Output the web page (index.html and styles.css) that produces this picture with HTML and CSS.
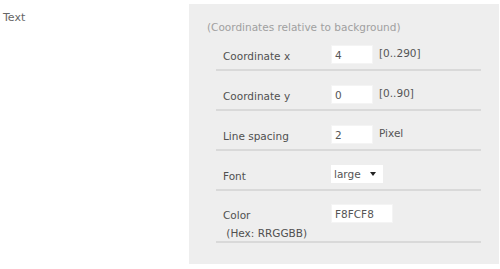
FILE: index.html
```html
<!DOCTYPE html>
<html>

<head>
    <meta charset="utf-8" />
    <title>Text</title>
    <link rel="stylesheet" href="styles.css">
</head>

<body>
    <div class="page">
        <div class="caption">Text</div>
        <div class="panel">
            <p class="hint">(Coordinates relative to background)</p>
            <div class="row">
                <span class="label">Coordinate x</span>
                <input class="field" type="text" value="4" />
                <span class="unit">[0..290]</span>
            </div>
            <div class="row">
                <span class="label">Coordinate y</span>
                <input class="field" type="text" value="0" />
                <span class="unit">[0..90]</span>
            </div>
            <div class="row">
                <span class="label">Line spacing</span>
                <input class="field" type="text" value="2" />
                <span class="unit">Pixel</span>
            </div>
            <div class="row">
                <span class="label">Font</span>
                <span class="select-wrap">
                    <select class="select">
                        <option>large</option>
                        <option>small</option>
                    </select>
                </span>
            </div>
            <div class="row row-tall">
                <span class="label">Color<br />&nbsp;(Hex: RRGGBB)</span>
                <input class="field field-wide" type="text" value="F8FCF8" />
            </div>
        </div>
    </div>
</body>

</html>
```

FILE: styles.css
```css
body {
    margin: 0;
    font-family: "DejaVu Sans", Verdana, sans-serif;
    font-size: 10px;
    color: #555;
    background: #fff;
}

.page {
    display: flex;
    padding: 4px 0 0 3px;
}

.caption {
    width: 186px;
    padding-top: 7px;
    font-size: 11px;
    color: #666;
}

.panel {
    width: 265px;
    padding: 17px 18px 21px 27px;
    background: #eeeeee;
}

.hint {
    margin: 0 0 -3px -9px;
    line-height: 13px;
    color: #a0a0a0;
    font-size: 10.5px;
}

.row {
    display: flex;
    align-items: flex-start;
    height: 24px;
    padding: 14px 0 0 7px;
    border-bottom: 2px solid #d9d9d9;
}

.row-tall {
    height: 37px;
    padding-top: 13px;
}

.label {
    width: 108px;
    padding-top: 2px;
    line-height: 18px;
    font-size: 10.5px;
    color: #505050;
}

.field {
    width: 42px;
    height: 19px;
    box-sizing: border-box;
    padding: 0 3px;
    border: 1px solid #f4f4f4;
    background: #fff;
    font-family: inherit;
    font-size: 10.5px;
    color: #555;
    outline: none;
}

.field-wide {
    width: 62px;
}

.unit {
    margin-left: 6px;
    line-height: 17px;
    font-size: 10.5px;
    color: #555;
}

.select-wrap {
    position: relative;
    display: inline-block;
}

.select {
    width: 52px;
    height: 18px;
    padding: 0 0 0 3px;
    border: 0;
    background: #fff;
    font-family: inherit;
    font-size: 10.5px;
    color: #555;
    -webkit-appearance: none;
    appearance: none;
    outline: none;
}

.select-wrap::after {
    content: "";
    position: absolute;
    right: 7px;
    top: 7px;
    border-left: 3.5px solid transparent;
    border-right: 3.5px solid transparent;
    border-top: 4px solid #222;
    pointer-events: none;
}
```
